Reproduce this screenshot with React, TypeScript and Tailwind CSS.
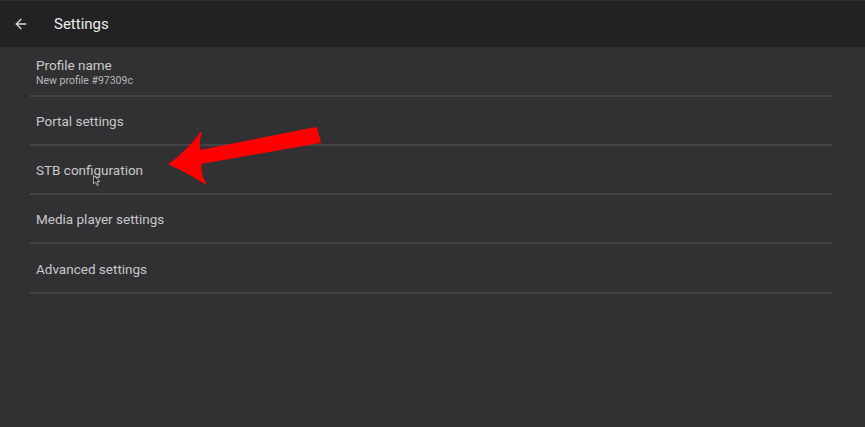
import { ArrowLeft } from 'lucide-react'

const items = ['Portal settings', 'STB configuration', 'Media player settings', 'Advanced settings']

function RedArrow() {
  return (
    <svg className="pointer-events-none absolute left-0 top-0" width="865" height="427" viewBox="0 0 865 427">
      <path
        d="M316,128 L320,142 L201,163 Q199,174 205,183 Q186,171 170,164 Q188,151 201,133 Q197,143 200,151 Z"
        fill="#ff0000"
        stroke="#ff0000"
        strokeWidth="2"
        strokeLinejoin="round"
      />
    </svg>
  )
}

function Cursor() {
  return (
    <svg className="pointer-events-none absolute left-[93px] top-[175px]" width="8" height="11" viewBox="0 0 8 11">
      <path d="M0.5,0.5 L0.5,9 L2.6,7 L4.2,10.5 L5.6,9.8 L4.1,6.5 L7,6.5 Z" fill="#1a1a1a" stroke="#cfcfcf" strokeWidth="0.8" />
    </svg>
  )
}

export default function App() {
  return (
    <div className="relative flex h-[427px] w-[865px] flex-col overflow-hidden bg-[#313033] font-['Roboto',sans-serif]">
      <header className="flex h-[47px] shrink-0 items-center border-t border-[#2d2d2f] bg-[#222224]">
        <ArrowLeft className="ml-[13px] h-[16px] w-[16px] text-[#d8d8d8]" strokeWidth={2} />
        <h1 className="ml-[25px] text-[15px] text-[#ececec]">Settings</h1>
      </header>

      <ul className="ml-[30px] w-[802px]">
        <li className="flex h-[50px] flex-col justify-center border-b-2 border-[#444446] pl-[6px] pt-[2px]">
          <span className="text-[13.5px] leading-[17px] text-[#cbcbcb]">Profile name</span>
          <span className="text-[10.5px] leading-[13px] text-[#b8b8b8]">New profile #97309c</span>
        </li>
        {items.map((label, i) => (
          <li
            key={label}
            className={`flex items-center border-b-2 border-[#444446] pl-[6px] pt-[2px] ${i === items.length - 1 ? 'h-[50px]' : 'h-[49px]'}`}
          >
            <span className="text-[13.5px] text-[#c8c8c8]">{label}</span>
          </li>
        ))}
      </ul>

      <RedArrow />
      <Cursor />
    </div>
  )
}
